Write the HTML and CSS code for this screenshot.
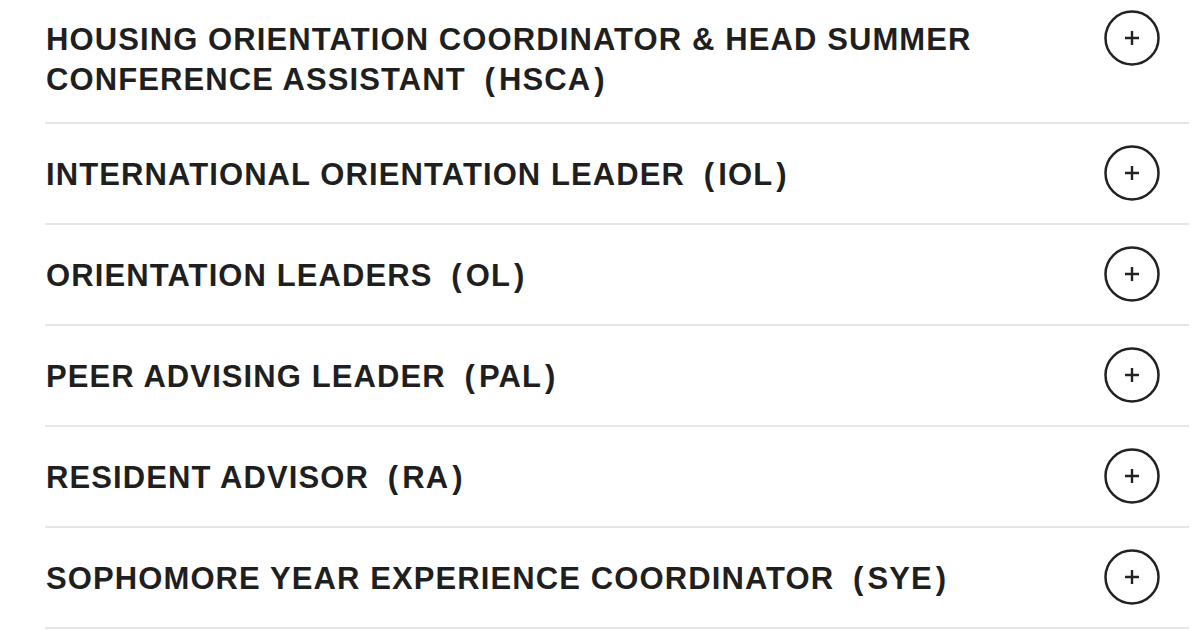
FILE: index.html
```html
<!DOCTYPE html>
<html lang="en">

<head>
    <meta charset="UTF-8">
    <meta name="viewport" content="width=device-width, initial-scale=1.0">
    <title>Student Positions</title>
    <link rel="stylesheet" href="styles.css">
</head>

<body>

    <ul class="accordion">
        <li class="item">
            <span class="title">Housing Orientation Coordinator &amp; Head Summer Conference Assistant <span class="abbr">HSCA</span></span>
            <button class="toggle" aria-label="Expand">
                <svg viewBox="0 0 56 56" width="56" height="56"><circle cx="28" cy="28" r="26.5" /><path d="M21 28h14M28 21v14" /></svg>
            </button>
        </li>
        <li class="item">
            <span class="title">International Orientation Leader <span class="abbr">IOL</span></span>
            <button class="toggle" aria-label="Expand">
                <svg viewBox="0 0 56 56" width="56" height="56"><circle cx="28" cy="28" r="26.5" /><path d="M21 28h14M28 21v14" /></svg>
            </button>
        </li>
        <li class="item">
            <span class="title">Orientation Leaders <span class="abbr">OL</span></span>
            <button class="toggle" aria-label="Expand">
                <svg viewBox="0 0 56 56" width="56" height="56"><circle cx="28" cy="28" r="26.5" /><path d="M21 28h14M28 21v14" /></svg>
            </button>
        </li>
        <li class="item">
            <span class="title">Peer Advising Leader <span class="abbr">PAL</span></span>
            <button class="toggle" aria-label="Expand">
                <svg viewBox="0 0 56 56" width="56" height="56"><circle cx="28" cy="28" r="26.5" /><path d="M21 28h14M28 21v14" /></svg>
            </button>
        </li>
        <li class="item">
            <span class="title">Resident Advisor <span class="abbr">RA</span></span>
            <button class="toggle" aria-label="Expand">
                <svg viewBox="0 0 56 56" width="56" height="56"><circle cx="28" cy="28" r="26.5" /><path d="M21 28h14M28 21v14" /></svg>
            </button>
        </li>
        <li class="item">
            <span class="title">Sophomore Year Experience Coordinator <span class="abbr">SYE</span></span>
            <button class="toggle" aria-label="Expand">
                <svg viewBox="0 0 56 56" width="56" height="56"><circle cx="28" cy="28" r="26.5" /><path d="M21 28h14M28 21v14" /></svg>
            </button>
        </li>
    </ul>

</body>

</html>
```

FILE: styles.css
```css
body {
    font-family: "Liberation Sans", Arial, sans-serif;
    background-color: #fff;
    color: #1f1f1f;
    margin: 0;
    padding: 0;
}

.accordion {
    list-style: none;
    margin: 0 0 0 45px;
    padding: 0;
    width: 1144px;
}

.item {
    display: flex;
    align-items: flex-start;
    justify-content: space-between;
    padding: 21px 29px 22px 1px;
    border-bottom: 2px solid #e6e6e6;
}

.item:first-child {
    padding-top: 10px;
}

.title {
    margin-top: 10px;
    max-width: 960px;
    font-size: 31px;
    font-weight: bold;
    line-height: 40px;
    letter-spacing: 1.1px;
    text-transform: uppercase;
}

.abbr {
    margin-left: 9px;
}

.abbr::before {
    content: "(";
    margin-right: 3px;
}

.abbr::after {
    content: ")";
    margin-left: 3px;
}

.toggle {
    flex: none;
    width: 56px;
    height: 56px;
    padding: 0;
    border: none;
    background: none;
    cursor: pointer;
}

.toggle svg {
    display: block;
    fill: none;
    stroke: #222;
}

.toggle circle {
    stroke-width: 2.5;
}

.toggle path {
    stroke-width: 2.4;
}
```
